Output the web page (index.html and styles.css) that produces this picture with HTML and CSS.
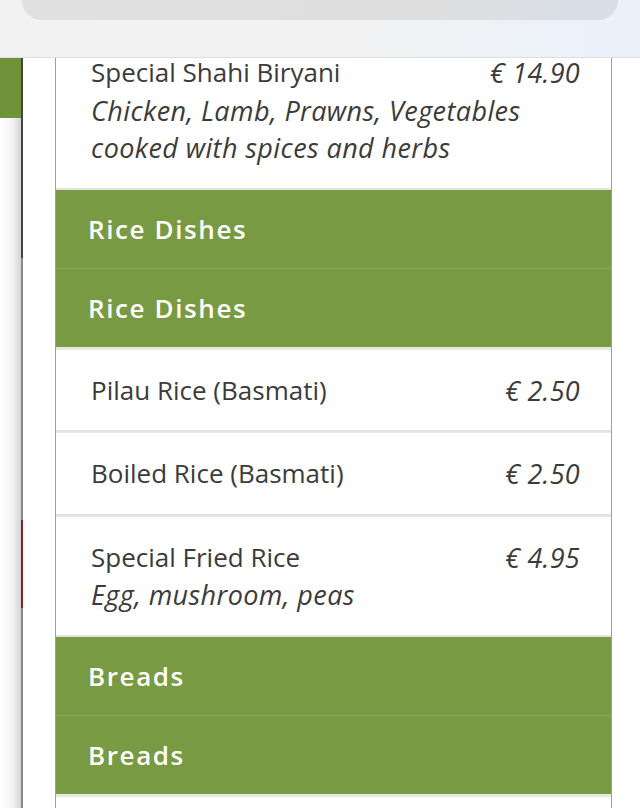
FILE: index.html
```html
<!DOCTYPE html>
<html lang="en">
<head>
<meta charset="utf-8">
<title>Menu</title>
<link rel="stylesheet" href="styles.css">
</head>
<body>
<div class="topbar"><div class="pill"></div></div>
<div class="stage">
  <div class="bgstrip"><div class="bg-green"></div></div>
  <div class="bgline"><div class="seg dark"></div><div class="seg gray"></div><div class="seg red"></div><div class="seg gray2"></div></div>
  <div class="modal">
    <div class="list">
      <div class="item">
        <div class="item-head"><span class="name">Special Shahi Biryani</span><span class="price">€ 14.90</span></div>
        <div class="desc">Chicken, Lamb, Prawns, Vegetables cooked with spices and herbs</div>
      </div>
      <div class="cat">Rice Dishes</div>
      <div class="cat sub">Rice Dishes</div>
      <div class="item first">
        <div class="item-head"><span class="name">Pilau Rice (Basmati)</span><span class="price">€ 2.50</span></div>
      </div>
      <div class="item">
        <div class="item-head"><span class="name">Boiled Rice (Basmati)</span><span class="price">€ 2.50</span></div>
      </div>
      <div class="item">
        <div class="item-head"><span class="name">Special Fried Rice</span><span class="price">€ 4.95</span></div>
        <div class="desc">Egg, mushroom, peas</div>
      </div>
      <div class="cat">Breads</div>
      <div class="cat sub">Breads</div>
      <div class="item first empty"></div>
    </div>
  </div>
  <div class="rightspace"></div>
</div>
</body>
</html>
```
FILE: styles.css
```css
html, body {
  margin: 0;
  padding: 0;
  width: 640px;
  height: 808px;
  overflow: hidden;
  background: #ffffff;
  font-family: "Open Sans", "DejaVu Sans", sans-serif;
}

.topbar {
  height: 57px;
  border-bottom: 1px solid #dcdfe3;
  background: linear-gradient(to right, #f2f2f2 0%, #f2f2f2 55%, #e9f1fb 100%);
  padding: 0 22px;
  position: relative;
  z-index: 2;
}

.pill {
  height: 20px;
  border-radius: 0 0 22px 22px;
  background: linear-gradient(to right, #e0e0e0 0%, #dfdfdf 70%, #d7dee8 100%);
}

.stage {
  display: flex;
  height: 750px;
  overflow: hidden;
}

.bgstrip {
  width: 21px;
  flex: none;
  background: linear-gradient(to right, #ffffff 0%, #f2f2f2 60%, #d4d4d4 100%);
}

.bg-green {
  height: 60px;
  background: #6f9339;
}

.bgline {
  width: 2px;
  flex: none;
  display: flex;
  flex-direction: column;
}

.seg.dark { height: 200px; background: #444; }
.seg.gray { height: 262px; background: #8a8a8a; }
.seg.red { height: 88px; background: #8a1f1f; }
.seg.gray2 { flex: 1; background: #8a8a8a; }

.modal {
  margin-left: 32px;
  width: 555px;
  flex: none;
  border-left: 1px solid #7ea5d5;
  border-right: 1px solid #7ea5d5;
  background: #ffffff;
  overflow: hidden;
}

.list {
  margin-top: -26px;
}

.item {
  padding: 22px 31px 21px 35px;
  border-bottom: 2px solid #e3e3e3;
  color: #3b3b3b;
  font-size: 26px;
  line-height: 37.5px;
}

.item.empty {
  height: 60px;
}

.item + .item {
  border-top: 1px solid #e8e8e8;
}

.item.first {
  border-top: 3px solid #e6ebe0;
}

.item-head {
  display: flex;
  justify-content: space-between;
  align-items: flex-start;
  height: 37.5px;
}

.price {
  font-style: italic;
  font-size: 27px;
  letter-spacing: 0.3px;
  line-height: 37.5px;
}

.desc {
  font-style: italic;
  font-size: 27px;
  letter-spacing: 0.4px;
  line-height: 37.5px;
  padding-right: 40px;
}

.cat {
  background: #789a42;
  color: #ffffff;
  font-weight: 600;
  font-size: 26px;
  letter-spacing: 1.6px;
  line-height: 38px;
  padding: 20px 20px 20px 32px;
}

.cat.sub {
  border-top: 1px solid #89aa56;
}

.rightspace {
  flex: 1;
  background: #ffffff;
}
```
